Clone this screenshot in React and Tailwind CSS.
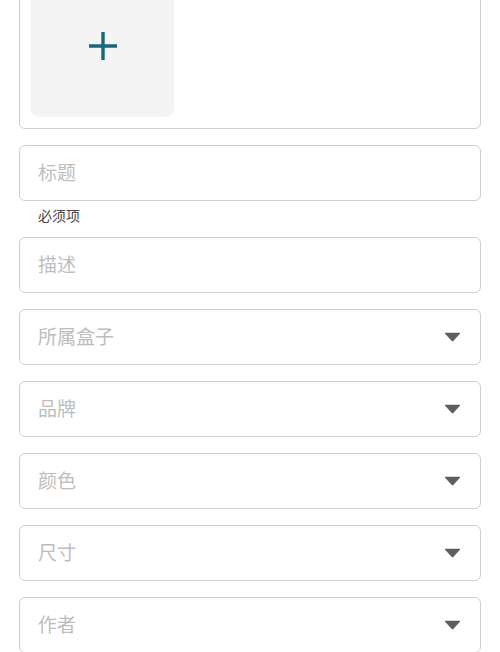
const font = { fontFamily: '"Noto Sans CJK SC", "Noto Sans", sans-serif' };

const selects = ['所属盒子', '品牌', '颜色', '尺寸', '作者'];

function Caret() {
  return (
    <svg width="17" height="10" viewBox="0 0 17 10" className="shrink-0">
      <path d="M1.5 0.8 H15.5 Q16.6 0.8 15.9 1.8 L9.3 9 Q8.5 9.8 7.7 9 L1.1 1.8 Q0.4 0.8 1.5 0.8 Z" fill="#5f5f5f" />
    </svg>
  );
}

function Field({ placeholder, select }) {
  return (
    <div className="flex h-[56px] items-center justify-between rounded-[6px] border border-[#cfcfcf] bg-white pl-[18px] pr-[19px]">
      <span className="text-[19px] leading-[26px] text-[#bdbdbd] -mt-[2px]">{placeholder}</span>
      {select && <Caret />}
    </div>
  );
}

export default function App() {
  return (
    <div className="min-h-[652px] overflow-hidden bg-white px-[19px]" style={font}>
      <div className="mt-[-38px] rounded-[6px] border border-[#cfcfcf] p-[11px]">
        <div className="flex h-[143px] w-[143px] items-center justify-center rounded-[8px] bg-[#f4f4f4]">
          <svg width="30" height="30" viewBox="0 0 30 30">
            <path d="M15 1 V29 M1 15 H29" stroke="#17687a" strokeWidth="3.4" />
          </svg>
        </div>
      </div>

      <div className="mt-[16px]">
        <Field placeholder="标题" />
        <p className="pl-[19px] pt-[4px] pb-[11px] text-[14px] leading-[21px] text-[#474747]">必须项</p>
      </div>

      <div className="flex flex-col gap-[16px]">
        <Field placeholder="描述" />
        {selects.map((s) => (
          <Field key={s} placeholder={s} select />
        ))}
      </div>
    </div>
  );
}
